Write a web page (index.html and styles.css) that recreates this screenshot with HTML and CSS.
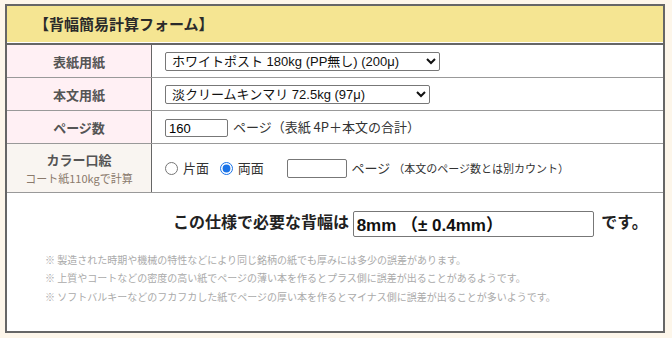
FILE: index.html
```html
<!DOCTYPE html>
<html lang="ja">
<head>
<meta charset="utf-8">
<link rel="stylesheet" href="styles.css">
</head>
<body>
<div class="wrap">
  <div class="title">【背幅簡易計算フォーム】</div>
  <table class="form">
    <tr>
      <th>表紙用紙</th>
      <td><select class="sel sel1"><option>ホワイトポスト 180kg (PP無し) (200μ)</option></select></td>
    </tr>
    <tr>
      <th>本文用紙</th>
      <td><select class="sel sel2"><option>淡クリームキンマリ 72.5kg (97μ)</option></select></td>
    </tr>
    <tr>
      <th>ページ数</th>
      <td><input class="num" type="text" value="160"> ページ（表紙 4P＋本文の合計）</td>
    </tr>
    <tr class="color">
      <th>カラー口絵<span class="sub">コート紙110kgで計算</span></th>
      <td>
        <label class="radio"><input type="radio" name="side"> 片面</label>
        <label class="radio"><input type="radio" name="side" checked> 両面</label>
        <input class="num num2" type="text"> ページ <small>（本文のページ数とは別カウント）</small>
      </td>
    </tr>
  </table>
  <div class="result">
    <div class="answer">この仕様で必要な背幅は <input class="out" type="text" value="8mm （± 0.4mm）"> です。</div>
    <ul class="notes">
      <li>※ 製造された時期や機械の特性などにより同じ銘柄の紙でも厚みには多少の誤差があります。</li>
      <li>※ 上質やコートなどの密度の高い紙でページの薄い本を作るとプラス側に誤差が出ることがあるようです。</li>
      <li>※ ソフトバルキーなどのフカフカした紙でページの厚い本を作るとマイナス側に誤差が出ることが多いようです。</li>
    </ul>
  </div>
</div>
</body>
</html>
```

FILE: styles.css
```css
html, body {
  margin: 0;
  padding: 0;
  background: #fdf6ea;
}
body {
  font-family: "Liberation Sans", "Noto Sans CJK JP", sans-serif;
  color: #222;
  font-size: 13px;
}
.wrap {
  margin: 4px 0 0 5px;
  width: 656px;
  height: 325px;
  border: 2px solid #666;
  background: #fff;
  box-sizing: content-box;
}
.title {
  height: 36px;
  line-height: 36px;
  background: #f5e592;
  border-bottom: 1px solid #fff;
  padding-left: 27px;
  font-family: "Noto Sans CJK JP", sans-serif;
  font-weight: bold;
  font-size: 15px;
  color: #2a2a2a;
}
.form {
  width: 100%;
  border-collapse: collapse;
  border-top: 2px solid #666;
}
.form th {
  width: 144px;
  background: #fff0f4;
  border-right: 1px solid #666;
  border-bottom: 1px solid #999;
  font-family: "Noto Sans CJK JP", sans-serif;
  font-size: 13px;
  font-weight: bold;
  color: #555;
  height: 32px;
  padding: 0;
  text-align: center;
}
.form td {
  border-bottom: 1px solid #999;
  padding: 0 0 0 13px;
  height: 32px;
  font-family: "Noto Sans CJK JP", sans-serif;
  font-size: 13px;
  color: #333;
}
.form tr.color th {
  background: #f9f5f1;
  height: 48px;
  line-height: 20px;
}
.form tr.color th .sub {
  display: block;
  font-size: 11px;
  font-weight: normal;
  color: #8a7a6c;
  line-height: 17px;
}
.sel {
  font-family: "Liberation Sans", "Noto Sans CJK JP", sans-serif;
  font-size: 13px;
  height: 19px;
  border: 1px solid #777;
  border-radius: 2px;
  background: #fff;
  color: #111;
  padding: 0 0 0 2px;
}
.sel1 { width: 275px; }
.sel2 { width: 265px; }
.num {
  width: 55px;
  height: 16px;
  border: 1px solid #777;
  border-radius: 2px;
  font-family: "Liberation Sans", sans-serif;
  font-size: 13px;
  padding: 0 3px;
  margin: 0 2px 0 0;
  vertical-align: middle;
}
.num2 {
  width: 52px;
  margin-left: 12px;
  height: 17px;
}
.radio {
  margin-right: 8px;
}
.radio input {
  margin: 0 2px 0 0;
  width: 13px;
  height: 13px;
  vertical-align: -2px;
  accent-color: #1a73e8;
}
.form small {
  font-size: 11px;
}
.result {
  padding-top: 16px;
}
.answer {
  font-family: "Noto Sans CJK JP", sans-serif;
  font-size: 16px;
  font-weight: bold;
  color: #222;
  padding-left: 166px;
}
.out {
  width: 233px;
  height: 22px;
  border: 1px solid #777;
  border-radius: 2px;
  font-family: "Liberation Sans", "Noto Sans CJK JP", sans-serif;
  font-size: 17px;
  font-weight: bold;
  color: #111;
  padding: 1px 3px;
  margin: 0 4px 0 0;
  vertical-align: middle;
}
.notes {
  list-style: none;
  margin: 14px 0 0 38px;
  padding: 0;
  font-family: "Noto Sans CJK JP", sans-serif;
  font-size: 10px;
  color: #aaa;
  line-height: 18.5px;
}
```
